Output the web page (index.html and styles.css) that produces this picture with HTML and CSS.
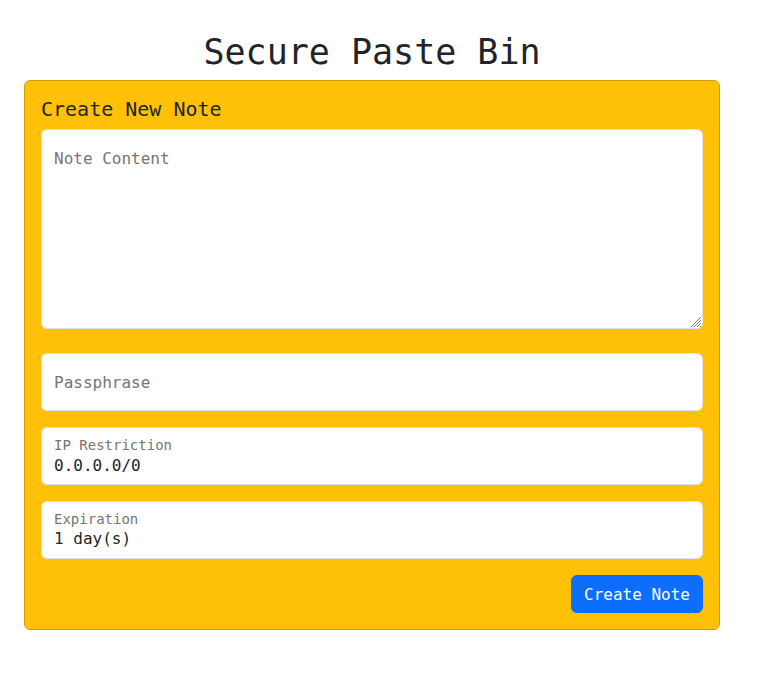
FILE: index.html
```html
<!DOCTYPE html>
<html lang="en">
<head>
<meta charset="utf-8">
<meta name="viewport" content="width=device-width, initial-scale=1">
<title>Secure Paste Bin</title>
<link rel="stylesheet" href="styles.css">
</head>
<body>
<main class="container">
  <h1 class="title">Secure Paste Bin</h1>
  <form class="card">
    <h2 class="card-title">Create New Note</h2>
    <div class="field field-note">
      <textarea class="control control-note" id="note"></textarea>
      <label class="label" for="note">Note Content</label>
      <svg class="grip" viewBox="0 0 12 12" aria-hidden="true"><path d="M1 11L11 1M4 11L11 4M7 11L11 7M10 11L11 10"/></svg>
    </div>
    <div class="field">
      <input class="control" type="password" id="pass">
      <label class="label" for="pass">Passphrase</label>
    </div>
    <div class="field">
      <input class="control filled" type="text" id="ip" value="0.0.0.0/0">
      <label class="label label-small" for="ip">IP Restriction</label>
    </div>
    <div class="field">
      <select class="control filled" id="expiration">
        <option>1 day(s)</option>
      </select>
      <label class="label label-small" for="expiration">Expiration</label>
    </div>
    <div class="actions">
      <button class="button" type="button">Create Note</button>
    </div>
  </form>
</main>
</body>
</html>
```
FILE: styles.css
```css
* {
  box-sizing: border-box;
}

body {
  margin: 0;
  background: #fff;
  color: #212529;
  font: 16px/24px "DejaVu Sans Mono", "Liberation Mono", monospace;
}

.container {
  max-width: 720px;
  margin: 0 auto 0 0;
  padding: 30px 0 24px 24px;
}

.title {
  margin: 0 0 6px;
  font-size: 35px;
  font-weight: 400;
  line-height: 44px;
  text-align: center;
}

.card {
  padding: 16px;
  border: 1px solid #d2a006;
  border-radius: 6px;
  background: #ffc107;
}

.card-title {
  margin: 0 0 8px;
  font-size: 20px;
  font-weight: 400;
  line-height: 24px;
}

.field {
  position: relative;
  margin-bottom: 16px;
}

.field-note {
  margin-bottom: 24px;
}

.control {
  display: block;
  width: 100%;
  height: 58px;
  margin: 0;
  padding: 16px 12px;
  border: 1px solid #dee2e6;
  border-radius: 6px;
  outline: 0;
  background: #fff;
  color: #212529;
  font: inherit;
  appearance: none;
}

.control-note {
  height: 200px;
  resize: vertical;
}

.control-note::-webkit-resizer {
  background: transparent;
}

.grip {
  position: absolute;
  right: 1px;
  bottom: 1px;
  width: 12px;
  height: 12px;
  fill: none;
  stroke: #777;
  stroke-width: 1;
  pointer-events: none;
}

.filled {
  padding: 26px 12px 8px;
  line-height: 22px;
}

.label {
  position: absolute;
  top: 18px;
  left: 13px;
  color: #757575;
  pointer-events: none;
}

.label-small {
  top: 8px;
  font-size: 14px;
  line-height: 20px;
}

.actions {
  display: flex;
  justify-content: flex-end;
}

.button {
  padding: 7px 12px 5px;
  border: 1px solid #0d6efd;
  border-radius: 6px;
  background: #0d6efd;
  color: #fff;
  font: inherit;
}
```
